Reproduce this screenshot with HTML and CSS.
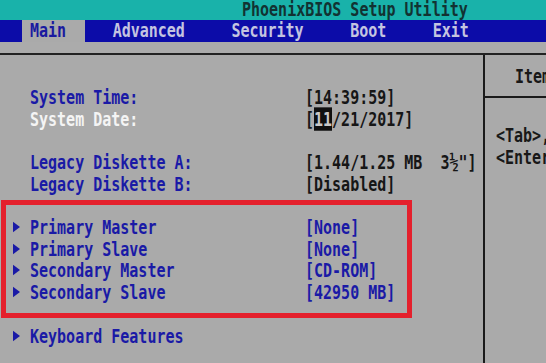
FILE: index.html
```html
<!DOCTYPE html>
<html lang="en">
<head>
  <meta charset="UTF-8">
  <title>PhoenixBIOS Setup Utility</title>
  <link rel="stylesheet" href="styles.css">
</head>
<body>
  <div class="screen">
    <header class="title-bar">
      <span class="title">PhoenixBIOS Setup Utility</span>
    </header>

    <nav class="tabs">
      <span class="tab active"><span class="tab-text">Main</span></span>
      <span class="tab"><span class="tab-text">Advanced</span></span>
      <span class="tab"><span class="tab-text">Security</span></span>
      <span class="tab"><span class="tab-text">Boot</span></span>
      <span class="tab"><span class="tab-text">Exit</span></span>
    </nav>

    <div class="strip"></div>

    <div class="frame">
      <section class="settings">
        <div class="row">
          <span class="arrow"></span>
          <span class="label">System Time:</span>
          <span class="value">[14:39:59]</span>
        </div>
        <div class="row">
          <span class="arrow"></span>
          <span class="label selected">System Date:</span>
          <span class="value">[<span class="cursor">11</span>/21/2017]</span>
        </div>
        <div class="row"></div>
        <div class="row">
          <span class="arrow"></span>
          <span class="label">Legacy Diskette A:</span>
          <span class="value">[1.44/1.25 MB&nbsp;&nbsp;3½"]</span>
        </div>
        <div class="row">
          <span class="arrow"></span>
          <span class="label">Legacy Diskette B:</span>
          <span class="value">[Disabled]</span>
        </div>

        <div class="marked">
          <div class="row">
            <span class="arrow"><i class="tri"></i></span>
            <span class="label">Primary Master</span>
            <span class="value sub">[None]</span>
          </div>
          <div class="row">
            <span class="arrow"><i class="tri"></i></span>
            <span class="label">Primary Slave</span>
            <span class="value sub">[None]</span>
          </div>
          <div class="row">
            <span class="arrow"><i class="tri"></i></span>
            <span class="label">Secondary Master</span>
            <span class="value sub">[CD-ROM]</span>
          </div>
          <div class="row">
            <span class="arrow"><i class="tri"></i></span>
            <span class="label">Secondary Slave</span>
            <span class="value sub">[42950 MB]</span>
          </div>
        </div>

        <div class="row">
          <span class="arrow"><i class="tri"></i></span>
          <span class="label">Keyboard Features</span>
        </div>
      </section>

      <aside class="help">
        <div class="help-head">
          <span class="help-title">Item Specific Help</span>
        </div>
        <div class="help-body">
          <div class="help-line">&lt;Tab&gt;, &lt;Shift-Tab&gt;, or</div>
          <div class="help-line">&lt;Enter&gt; selects field.</div>
        </div>
      </aside>
    </div>
  </div>
</body>
</html>
```

FILE: styles.css
```css
body {
  margin: 0;
  background-color: #aaaaaa;
  font-family: "DejaVu Sans Mono", monospace;
  font-size: 15px;
  font-weight: bold;
  overflow: hidden;
}
.screen {
  width: 546px;
  height: 363px;
  overflow: hidden;
  background-color: #aaaaaa;
}

/* top bars */
.title-bar {
  height: 20px;
  background-color: #19b2aa;
  display: flex;
  align-items: center;
  padding-left: 242px;
}
.title {
  color: #123232;
  line-height: 15px;
  white-space: nowrap;
  transform: scaleY(1.3);
}
.tabs {
  height: 22px;
  background-color: #0c0ca8;
  display: flex;
  align-items: stretch;
  gap: 19.5px;
  padding-left: 22px;
}
.tab {
  display: flex;
  align-items: center;
  padding: 0 19px 0 8px;
  color: #c4c4e0;
  white-space: nowrap;
}
.tab-text {
  line-height: 15px;
  transform: scaleY(1.3);
}
.tab.active {
  background-color: #aaaaaa;
  color: #1a1aa0;
}
.strip {
  height: 11px;
  background-color: #ababab;
}

/* main frame */
.frame {
  display: flex;
  border-top: 2px solid #222;
  height: 310px;
}
.settings {
  width: 483px;
  flex-shrink: 0;
  border-right: 2px solid #1a1a1a;
  padding-top: 31px;
}
.row {
  height: 21.7px;
  display: flex;
  align-items: center;
  padding-left: 13px;
  white-space: nowrap;
  transform: scaleY(1.3);
}
.arrow {
  width: 17px;
  display: flex;
  align-items: center;
}
.tri {
  width: 0;
  height: 0;
  border-left: 7px solid #1a1aa6;
  border-top: 4px solid transparent;
  border-bottom: 4px solid transparent;
}
.label {
  width: 275px;
  color: #1a1aa6;
}
.label.selected {
  color: #f4f4f4;
}
.value {
  color: #161616;
}
.value.sub {
  color: #1a1aa6;
}
.cursor {
  background-color: #101010;
  color: #c8c8c8;
}

.marked {
  margin: 5.5px 0 7px 1px;
  width: 401px;
  border: 5px solid #e4202c;
  padding: 11px 0 10px 0;
}
.marked .row {
  padding-left: 7px;
}

/* help column */
.help {
  flex: 1;
  min-width: 260px;
}
.help-head {
  height: 41px;
  border-bottom: 2px solid #1a1a1a;
  display: flex;
  align-items: center;
  padding-left: 30px;
}
.help-title,
.help-line {
  color: #181818;
  white-space: nowrap;
  transform: scaleY(1.3);
}
.help-body {
  padding: 26px 0 0 11px;
}
.help-line {
  height: 21.7px;
  display: flex;
  align-items: center;
}
```
